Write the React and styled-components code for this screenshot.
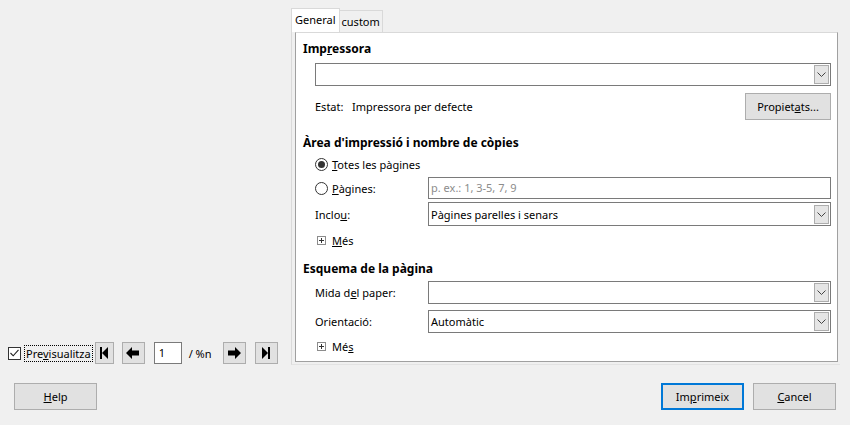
import styled, { createGlobalStyle } from "styled-components"

const GlobalStyle = createGlobalStyle`
  html, body {
    margin: 0;
    padding: 0;
    background: #f0f0f0;
  }
  body {
    font-family: "Noto Sans", "Open Sans", sans-serif;
    font-size: 11px;
    color: #000;
  }
`;

const Dialog = styled.div`
  width: 850px;
  height: 425px;
  display: flex;
  flex-direction: column;
  box-sizing: border-box;
`;

const Main = styled.div`
  display: flex;
  height: 365px;
`;

const LeftCol = styled.div`
  width: 291px;
  display: flex;
  align-items: flex-end;
  padding: 0 0 1px 8px;
  box-sizing: border-box;
`;

const PreviewBar = styled.div`
  display: flex;
  align-items: center;
  height: 22px;
`;

const CheckLabel = styled.label`
  display: flex;
  align-items: center;
  gap: 3px;
`;

const CheckBox = styled.span`
  width: 11px;
  height: 11px;
  border: 1px solid #333;
  background: #fff;
  display: flex;
  align-items: center;
  justify-content: center;
`;

const FocusText = styled.span`
  border: 1px dotted #000;
  padding: 0 1px;
  line-height: 15px;
`;

const NavButton = styled.button`
  width: ${p => p.$w || 23}px;
  height: 22px;
  margin-left: ${p => p.$gap || 8}px;
  background: #e1e1e1;
  border: 1px solid #adadad;
  padding: 0;
  display: flex;
  align-items: center;
  justify-content: center;
`;

const PageInput = styled.div`
  width: 22px;
  height: 20px;
  margin-left: 9px;
  border: 1px solid #7a7a7a;
  background: #fff;
  padding-left: 4px;
  line-height: 20px;
  box-sizing: content-box;
`;

const PageCount = styled.span`
  margin-left: 7px;
  width: 26px;
`;

const RightCol = styled.div`
  flex: 1;
  padding-top: 8px;
  display: flex;
  flex-direction: column;
`;

const TabStrip = styled.div`
  display: flex;
  align-items: flex-end;
  height: 24px;
`;

const Tab = styled.div`
  height: ${p => (p.$active ? 24 : 22)}px;
  padding: 0 ${p => (p.$active ? 3 : 2)}px;
  box-sizing: border-box;
  background: ${p => (p.$active ? "#fff" : "#f0f0f0")};
  border: 1px solid #d9d9d9;
  border-bottom: none;
  ${p => (p.$active ? "" : "border-left: none;")}
  line-height: 22px;
`;

const Frame = styled.div`
  width: 549px;
  height: 333px;
  box-sizing: border-box;
  border-left: 1px solid #dadada;
  border-bottom: 1px solid #e3e3e3;
  padding: 0 2px 2px 3px;
`;

const Pane = styled.div`
  height: 100%;
  box-sizing: border-box;
  background: #fff;
  border: 1px solid #a0a0a0;
  border-top-color: #d9d9d9;
  padding: 0 6px 0 7px;
  display: flex;
  flex-direction: column;
`;

const Heading = styled.div`
  font-weight: bold;
  font-size: 12px;
  height: 18px;
  line-height: 18px;
  margin-top: ${p => p.$mt}px;
`;

const Row = styled.div`
  display: flex;
  align-items: center;
  height: ${p => p.$h || 23}px;
  margin-top: ${p => p.$mt}px;
  padding-left: ${p => (p.$indent ? 12 : 0)}px;
`;

const FieldLabel = styled.span`
  width: 113px;
  flex-shrink: 0;
  display: flex;
  align-items: center;
`;

const Combo = styled.div`
  flex: 1;
  height: 100%;
  box-sizing: border-box;
  border: 1px solid #7a7a7a;
  background: #fff;
  display: flex;
  align-items: center;
  padding-left: 2px;
`;

const ComboText = styled.span`
  flex: 1;
`;

const DropButton = styled.span`
  width: 15px;
  height: 19px;
  margin-right: 1px;
  background: #e5e5e5;
  border: 1px solid #adadad;
  box-sizing: border-box;
  display: flex;
  align-items: center;
  justify-content: center;
`;

const TextInput = styled.div`
  flex: 1;
  height: 100%;
  box-sizing: border-box;
  border: 1px solid #7a7a7a;
  padding-left: 2px;
  line-height: 20px;
  color: ${p => (p.$placeholder ? "#8c8c8c" : "#000")};
`;

const StatusRow = styled(Row)`
  justify-content: space-between;
`;

const PushButton = styled.button`
  font: inherit;
  color: #000;
  width: ${p => p.$w || 83}px;
  height: 27px;
  background: #e1e1e1;
  border: ${p => (p.$default ? "2px solid #0078d7" : "1px solid #adadad")};
  padding: 0;
`;

const Radio = styled.span`
  width: 11px;
  height: 11px;
  border: 1px solid #333;
  border-radius: 50%;
  background: #fff;
  margin-right: 4px;
  display: flex;
  align-items: center;
  justify-content: center;
  &::after {
    content: "";
    display: ${p => (p.$checked ? "block" : "none")};
    width: 7px;
    height: 7px;
    border-radius: 50%;
    background: #333;
  }
`;

const Expander = styled.span`
  width: 7px;
  height: 7px;
  border: 1px solid #8c8c8c;
  margin: 0 6px 0 2px;
  position: relative;
  &::before, &::after {
    content: "";
    position: absolute;
    background: #333;
  }
  &::before { left: 1px; top: 3px; width: 5px; height: 1px; }
  &::after { left: 3px; top: 1px; width: 1px; height: 5px; }
`;

const Footer = styled.div`
  display: flex;
  align-items: center;
  padding: 18px 14px 0 14px;
  gap: 9px;
`;

const Spacer = styled.div`
  flex: 1;
`;

const Chevron = () => (
  <svg width="9" height="5" viewBox="0 0 9 5">
    <path d="M0.5 0.5 L4.5 4.5 L8.5 0.5" fill="none" stroke="#444" strokeWidth="1" />
  </svg>
);

const ComboBox = ({ value }) => (
  <Combo>
    <ComboText>{value}</ComboText>
    <DropButton><Chevron /></DropButton>
  </Combo>
);

const NavIcon = ({ kind }) => {
  if (kind === "first")
    return (
      <svg width="10" height="14" viewBox="0 0 10 14">
        <rect x="1" y="1" width="2" height="12" fill="#000" />
        <path d="M9 1 L9 13 L3 7 Z" fill="#000" />
      </svg>
    );
  if (kind === "last")
    return (
      <svg width="10" height="14" viewBox="0 0 10 14">
        <path d="M1 1 L1 13 L7 7 Z" fill="#000" />
        <rect x="7" y="1" width="2" height="12" fill="#000" />
      </svg>
    );
  const d = kind === "prev"
    ? "M1 7 L7 1 L7 4.5 L14 4.5 L14 9.5 L7 9.5 L7 13 Z"
    : "M15 7 L9 1 L9 4.5 L2 4.5 L2 9.5 L9 9.5 L9 13 Z";
  return (
    <svg width="16" height="14" viewBox="0 0 16 14">
      <path d={d} fill="#000" />
    </svg>
  );
};

const App = () => {
  return (
    <>
      <GlobalStyle />
      <Dialog>
        <Main>
          <LeftCol>
            <PreviewBar>
              <CheckLabel>
                <CheckBox>
                  <svg width="9" height="8" viewBox="0 0 9 8">
                    <path d="M0.5 4 L3.2 6.8 L8.5 0.8" fill="none" stroke="#222" strokeWidth="1.1" />
                  </svg>
                </CheckBox>
                <FocusText>Pre<u>v</u>isualitza</FocusText>
              </CheckLabel>
              <NavButton $gap={2} $w={19}><NavIcon kind="first" /></NavButton>
              <NavButton><NavIcon kind="prev" /></NavButton>
              <PageInput>1</PageInput>
              <PageCount>/ %n</PageCount>
              <NavButton><NavIcon kind="next" /></NavButton>
              <NavButton $gap={9}><NavIcon kind="last" /></NavButton>
            </PreviewBar>
          </LeftCol>
          <RightCol>
            <TabStrip>
              <Tab $active>General</Tab>
              <Tab>custom</Tab>
            </TabStrip>
            <Frame>
              <Pane>
                <Heading $mt={7}>Imp<u>r</u>essora</Heading>
                <Row $indent $mt={5}>
                  <ComboBox value="" />
                </Row>
                <StatusRow $indent $mt={7} $h={27}>
                  <span>Estat:&nbsp;&nbsp; Impressora per defecte</span>
                  <PushButton $w={86}>Propiet<u>a</u>ts...</PushButton>
                </StatusRow>
                <Heading $mt={14}>Àrea d'impressió i nombre de còpies</Heading>
                <Row $indent $mt={3} $h={18}>
                  <Radio $checked />
                  <span><u>T</u>otes les pàgines</span>
                </Row>
                <Row $indent $mt={4} $h={22}>
                  <FieldLabel>
                    <Radio /><span><u>P</u>àgines:</span>
                  </FieldLabel>
                  <TextInput $placeholder>p. ex.: 1, 3-5, 7, 9</TextInput>
                </Row>
                <Row $indent $mt={3} $h={24}>
                  <FieldLabel>Inclo<u>u</u>:</FieldLabel>
                  <ComboBox value="Pàgines parelles i senars" />
                </Row>
                <Row $indent $mt={5} $h={18}>
                  <Expander />
                  <span><u>M</u>és</span>
                </Row>
                <Heading $mt={11}>Esquema de la pàgina</Heading>
                <Row $indent $mt={3} $h={23}>
                  <FieldLabel>Mida d<u>e</u>l paper:</FieldLabel>
                  <ComboBox value="" />
                </Row>
                <Row $indent $mt={6} $h={23}>
                  <FieldLabel>Orientació:</FieldLabel>
                  <ComboBox value="Automàtic" />
                </Row>
                <Row $indent $mt={4} $h={18}>
                  <Expander />
                  <span>Mé<u>s</u></span>
                </Row>
              </Pane>
            </Frame>
          </RightCol>
        </Main>
        <Footer>
          <PushButton><u>H</u>elp</PushButton>
          <Spacer />
          <PushButton $default>Im<u>p</u>rimeix</PushButton>
          <PushButton><u>C</u>ancel</PushButton>
        </Footer>
      </Dialog>
    </>
  )
}

export default App
